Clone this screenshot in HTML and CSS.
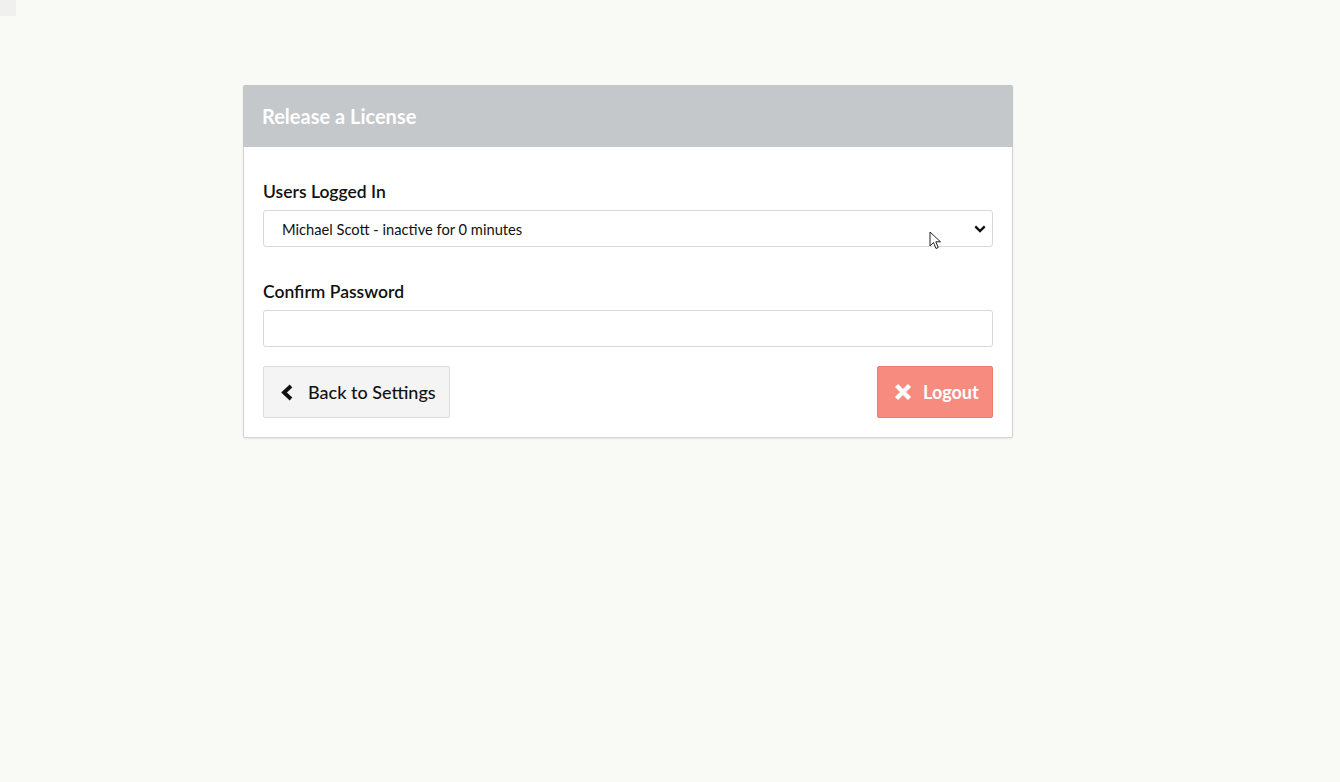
FILE: index.html
```html
<!DOCTYPE html>
<html>
<head>
<meta charset="utf-8">
<link rel="stylesheet" href="styles.css">
</head>
<body>
<div class="corner"></div>
<div class="card">
  <div class="card-header">Release a License</div>
  <div class="card-body">
    <div class="form-group">
      <label class="label">Users Logged In</label>
      <div class="select">
        <span>Michael Scott - inactive for 0 minutes</span>
        <svg class="caret" width="12" height="8" viewBox="0 0 12 8"><path d="M1.3 1.3 L6 6 L10.7 1.3" fill="none" stroke="#111" stroke-width="2.4"/></svg>
      </div>
    </div>
    <div class="form-group">
      <label class="label">Confirm Password</label>
      <div class="input"></div>
    </div>
    <div class="actions">
      <button class="btn btn-back">
        <svg width="14" height="17" viewBox="0 0 14 17"><path d="M11 2 L4 8.5 L11 15" fill="none" stroke="#111" stroke-width="3.8"/></svg>
        <span>Back to Settings</span>
      </button>
      <button class="btn btn-logout">
        <svg width="18" height="18" viewBox="0 0 18 18"><path d="M2.5 2.5 L15.5 15.5 M15.5 2.5 L2.5 15.5" fill="none" stroke="#fff" stroke-width="4.4"/></svg>
        <span>Logout</span>
      </button>
    </div>
  </div>
</div>
<svg class="cursor" width="14" height="20" viewBox="0 0 14 20"><path d="M1 1 L1 15 L4.5 11.5 L7 17.5 L9.3 16.5 L6.8 10.8 L11.5 10.8 Z" fill="#fff" stroke="#222" stroke-width="1"/></svg>
</body>
</html>
```
FILE: styles.css
```css
html, body {
  margin: 0;
  padding: 0;
  background: #f9f9f6;
  font-family: Lato, "Open Sans", sans-serif;
}
body {
  padding-top: 85px;
  position: relative;
  min-height: 697px;
}
.corner {
  position: absolute;
  left: 0;
  top: 0;
  width: 16px;
  height: 16px;
  background: #f0f0ef;
}
.card {
  margin-left: 243px;
  width: 768px;
  background: #fff;
  border: 1px solid #d2d4d6;
  border-radius: 2px;
  box-shadow: 0 1px 2px rgba(0,0,0,0.08);
}
.card-header {
  background: #c4c8cb;
  color: #fff;
  font-weight: 700;
  font-size: 20px;
  height: 62px;
  line-height: 62px;
  padding-left: 19px;
  margin: -1px -1px 0 -1px;
  border-radius: 2px 2px 0 0;
}
.card-body {
  padding: 34px 19px 19px 19px;
}
.form-group {
  margin-bottom: 19px;
}
.form-group + .form-group {
  margin-top: 34px;
}
.label {
  display: block;
  font-size: 17.5px;
  font-weight: 600;
  color: #111;
  line-height: 22px;
  margin-bottom: 7px;
}
.select {
  height: 35px;
  border: 1px solid #d9d9d9;
  border-radius: 3px;
  display: flex;
  align-items: center;
  justify-content: space-between;
  padding: 0 6px 0 18px;
  font-size: 14.7px;
  color: #111;
}
.input {
  height: 35px;
  border: 1px solid #d9d9d9;
  border-radius: 3px;
}
.actions {
  display: flex;
  justify-content: space-between;
}
.btn {
  box-sizing: border-box;
  height: 52px;
  display: flex;
  align-items: center;
  white-space: nowrap;
  font-family: Lato, sans-serif;
  font-size: 18px;
  border-radius: 2px;
  padding: 0 8px 0 16px;
  cursor: pointer;
}
.btn-back {
  background: #f4f4f4;
  border: 1px solid #dcdcdc;
  color: #111;
  font-weight: 500;
  width: 187px;
  gap: 14px;
}
.btn-logout {
  background: #f78b80;
  border: 1px solid #ef7a70;
  color: #fff;
  font-weight: 700;
  width: 116px;
  gap: 11px;
}
.cursor {
  position: absolute;
  left: 929px;
  top: 231px;
}
```
